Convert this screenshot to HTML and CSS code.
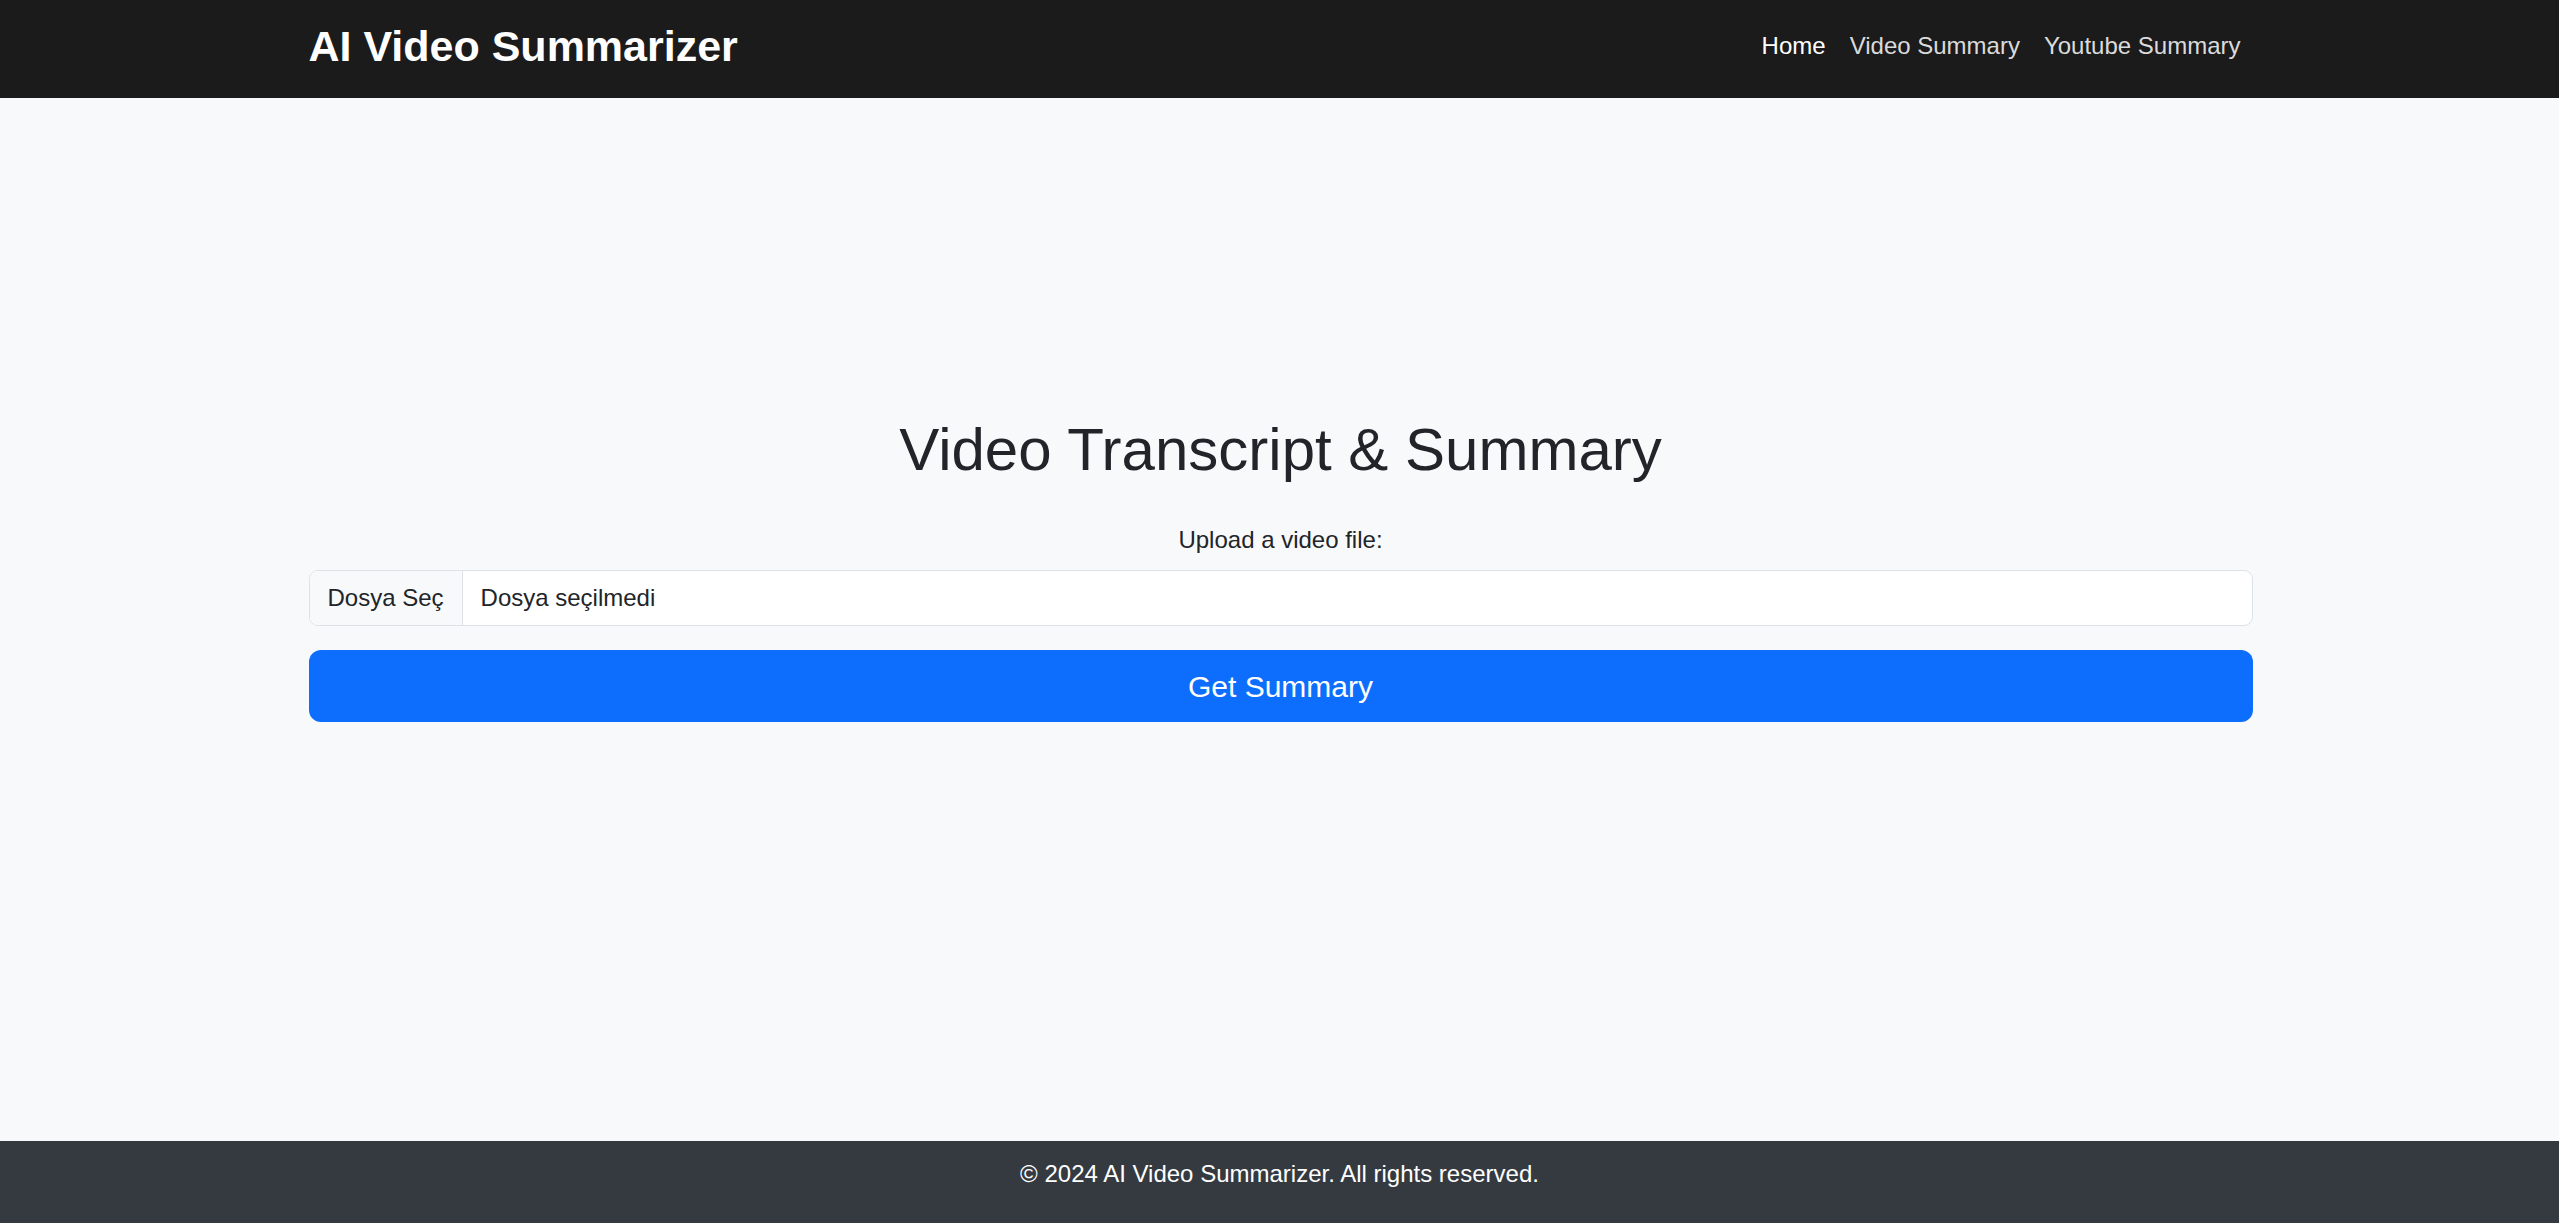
FILE: index.html
```html
<!DOCTYPE html>
<html lang="en">
<head>
<meta charset="utf-8">
<title>AI Video Summarizer</title>
<link rel="stylesheet" href="styles.css">
</head>
<body>
<header class="navbar">
  <div class="container nav-inner">
    <a class="brand" href="#">AI Video Summarizer</a>
    <nav class="nav-links">
      <a class="nav-link active" href="#">Home</a>
      <a class="nav-link" href="#">Video Summary</a>
      <a class="nav-link" href="#">Youtube Summary</a>
    </nav>
  </div>
</header>
<main class="main">
  <div class="container">
    <h1 class="title">Video Transcript &amp; Summary</h1>
    <form class="upload-form">
      <label class="form-label" for="file">Upload a video file:</label>
      <div class="file-input">
        <span class="file-btn">Dosya Seç</span>
        <span class="file-name">Dosya seçilmedi</span>
      </div>
      <button type="button" class="btn-primary">Get Summary</button>
    </form>
  </div>
</main>
<footer class="footer">
  <p class="footer-text">© 2024 AI Video Summarizer. All rights reserved.</p>
</footer>
</body>
</html>
```
FILE: styles.css
```css
* { box-sizing: border-box; }
html, body { margin: 0; padding: 0; }
body {
  font-family: "Liberation Sans", Arial, sans-serif;
  background: #f8f9fa;
  color: #212529;
  font-size: 24px;
  line-height: 1.5;
  display: flex;
  flex-direction: column;
  min-height: 100vh;
}
.container {
  width: 1944px;
  margin: 0 auto;
  position: relative;
  left: 1px;
}
.navbar {
  background: #1b1b1b;
  height: 98px;
  display: flex;
  align-items: center;
}
.nav-inner {
  display: flex;
  align-items: center;
  justify-content: space-between;
}
.brand {
  color: #fff;
  font-weight: 700;
  font-size: 43px;
  line-height: 1.2;
  text-decoration: none;
  margin-top: -5px;
}
.nav-links {
  display: flex;
  margin-top: -6px;
}
.nav-link {
  color: rgba(255,255,255,0.85);
  text-decoration: none;
  padding: 0 12px;
  font-size: 24px;
  line-height: 36px;
}
.nav-link.active { color: #fff; }
.main {
  flex: 1;
  padding-top: 316px;
}
.title {
  text-align: center;
  font-size: 60px;
  font-weight: 400;
  line-height: 72px;
  margin: 0 0 36px;
}
.upload-form {
  display: flex;
  flex-direction: column;
}
.form-label {
  text-align: center;
  margin-bottom: 12px;
  line-height: 36px;
}
.file-input {
  display: flex;
  background: #fff;
  border: 1.5px solid #dee2e6;
  border-radius: 9px;
  overflow: hidden;
  height: 56px;
}
.file-btn {
  background: #f8f9fa;
  border-right: 1.5px solid #dee2e6;
  padding: 0 18px;
  display: flex;
  align-items: center;
}
.file-name {
  padding: 0 18px;
  display: flex;
  align-items: center;
}
.btn-primary {
  margin-top: 24px;
  height: 72px;
  background: #0d6efd;
  color: #fff;
  border: none;
  border-radius: 12px;
  font-family: inherit;
  font-size: 30px;
  line-height: 1.5;
  cursor: pointer;
}
.footer {
  background: #343a40;
  color: #fff;
  text-align: center;
  padding: 15px 0 31px;
}
.footer-text {
  margin: 0;
  line-height: 36px;
}
```
